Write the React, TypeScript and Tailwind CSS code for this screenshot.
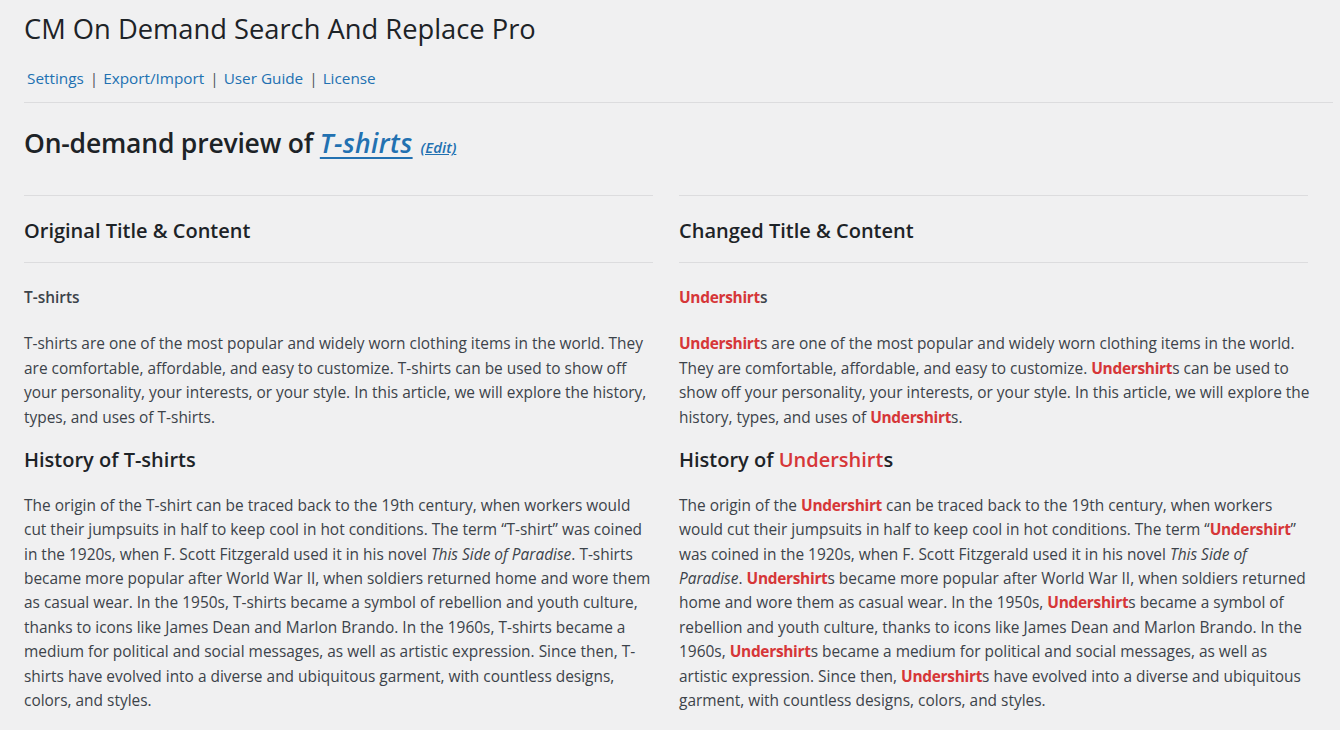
import React from "react";

const R = ({ children }: { children: React.ReactNode }) => (
  <span className="font-bold tracking-[-0.3px] text-[#d63638]">{children}</span>
);

export default function App() {
  return (
    <div
      className="min-h-[730px] bg-[#f0f0f1] pl-[24px] pr-[7px] text-[#3c434a]"
      style={{ fontFamily: "'Open Sans', 'Noto Sans', sans-serif" }}
    >
      <h1 className="pt-[11px] text-[27.3px] leading-[36px] font-normal text-[#1d2327]">
        CM On Demand Search And Replace Pro
      </h1>
      <div className="mt-[19px] flex items-center border-b border-[#dcdcde] pb-[12px] pl-[3px] text-[15.3px] leading-[24px]">
        <a className="text-[#2271b1]">Settings</a>
        <span className="ml-[6px] mr-[5px] text-[#50575e]">|</span>
        <a className="text-[#2271b1]">Export/Import</a>
        <span className="ml-[6px] mr-[5px] text-[#50575e]">|</span>
        <a className="text-[#2271b1]">User Guide</a>
        <span className="ml-[6px] mr-[5px] text-[#50575e]">|</span>
        <a className="text-[#2271b1]">License</a>
      </div>

      <h2 className="mt-[22px] text-[26.5px] leading-[36px] font-semibold text-[#1d2327]">
        <span className="tracking-[-0.2px]">On-demand preview of&nbsp;</span>
        <a className="italic tracking-[0.4px] text-[#2271b1] underline decoration-[1.5px] underline-offset-[4px]">T-shirts</a>
        <a className="ml-[8px] text-[15px] font-semibold italic text-[#2271b1] underline">(Edit)</a>
      </h2>

      <div className="mt-[30px] grid w-[1284px] grid-cols-2 gap-[26px] text-[15.45px] leading-[24.375px]">
        <section className="border-t border-[#dcdcde]">
          <h3 className="border-b border-[#dcdcde] pt-[21px] pb-[17px] text-[20px] leading-[28px] font-semibold text-[#1d2327]">
            Original Title &amp; Content
          </h3>
          <div className="mt-[22px] font-semibold">T-shirts</div>
          <p className="mt-[22px] whitespace-nowrap">
            T-shirts are one of the most popular and widely worn clothing items in the world. They<br />
            are comfortable, affordable, and easy to customize. T-shirts can be used to show off<br />
            your personality, your interests, or your style. In this article, we will explore the history,<br />
            types, and uses of T-shirts.
          </p>
          <h4 className="mt-[17px] text-[20px] leading-[28px] font-semibold text-[#1d2327]">History of T-shirts</h4>
          <p className="mt-[19px] whitespace-nowrap">
            The origin of the T-shirt can be traced back to the 19th century, when workers would<br />
            cut their jumpsuits in half to keep cool in hot conditions. The term “T-shirt” was coined<br />
            in the 1920s, when F. Scott Fitzgerald used it in his novel <em>This Side of Paradise</em>. T-shirts<br />
            became more popular after World War II, when soldiers returned home and wore them<br />
            as casual wear. In the 1950s, T-shirts became a symbol of rebellion and youth culture,<br />
            thanks to icons like James Dean and Marlon Brando. In the 1960s, T-shirts became a<br />
            medium for political and social messages, as well as artistic expression. Since then, T-<br />
            shirts have evolved into a diverse and ubiquitous garment, with countless designs,<br />
            colors, and styles.
          </p>
        </section>

        <section className="border-t border-[#dcdcde]">
          <h3 className="border-b border-[#dcdcde] pt-[21px] pb-[17px] text-[20px] leading-[28px] font-semibold text-[#1d2327]">
            Changed Title &amp; Content
          </h3>
          <div className="mt-[22px] font-semibold">
            <R>Undershirt</R>s
          </div>
          <p className="mt-[22px] whitespace-nowrap">
            <R>Undershirt</R>s are one of the most popular and widely worn clothing items in the world.<br />
            They are comfortable, affordable, and easy to customize. <R>Undershirt</R>s can be used to<br />
            show off your personality, your interests, or your style. In this article, we will explore the<br />
            history, types, and uses of <R>Undershirt</R>s.
          </p>
          <h4 className="mt-[17px] text-[20px] leading-[28px] font-semibold text-[#1d2327]">
            History of <span className="text-[#d63638]">Undershirt</span>s
          </h4>
          <p className="mt-[19px] whitespace-nowrap">
            The origin of the <R>Undershirt</R> can be traced back to the 19th century, when workers<br />
            would cut their jumpsuits in half to keep cool in hot conditions. The term “<R>Undershirt</R>”<br />
            was coined in the 1920s, when F. Scott Fitzgerald used it in his novel <em>This Side of</em><br />
            <em>Paradise</em>. <R>Undershirt</R>s became more popular after World War II, when soldiers returned<br />
            home and wore them as casual wear. In the 1950s, <R>Undershirt</R>s became a symbol of<br />
            rebellion and youth culture, thanks to icons like James Dean and Marlon Brando. In the<br />
            1960s, <R>Undershirt</R>s became a medium for political and social messages, as well as<br />
            artistic expression. Since then, <R>Undershirt</R>s have evolved into a diverse and ubiquitous<br />
            garment, with countless designs, colors, and styles.
          </p>
        </section>
      </div>
    </div>
  );
}
